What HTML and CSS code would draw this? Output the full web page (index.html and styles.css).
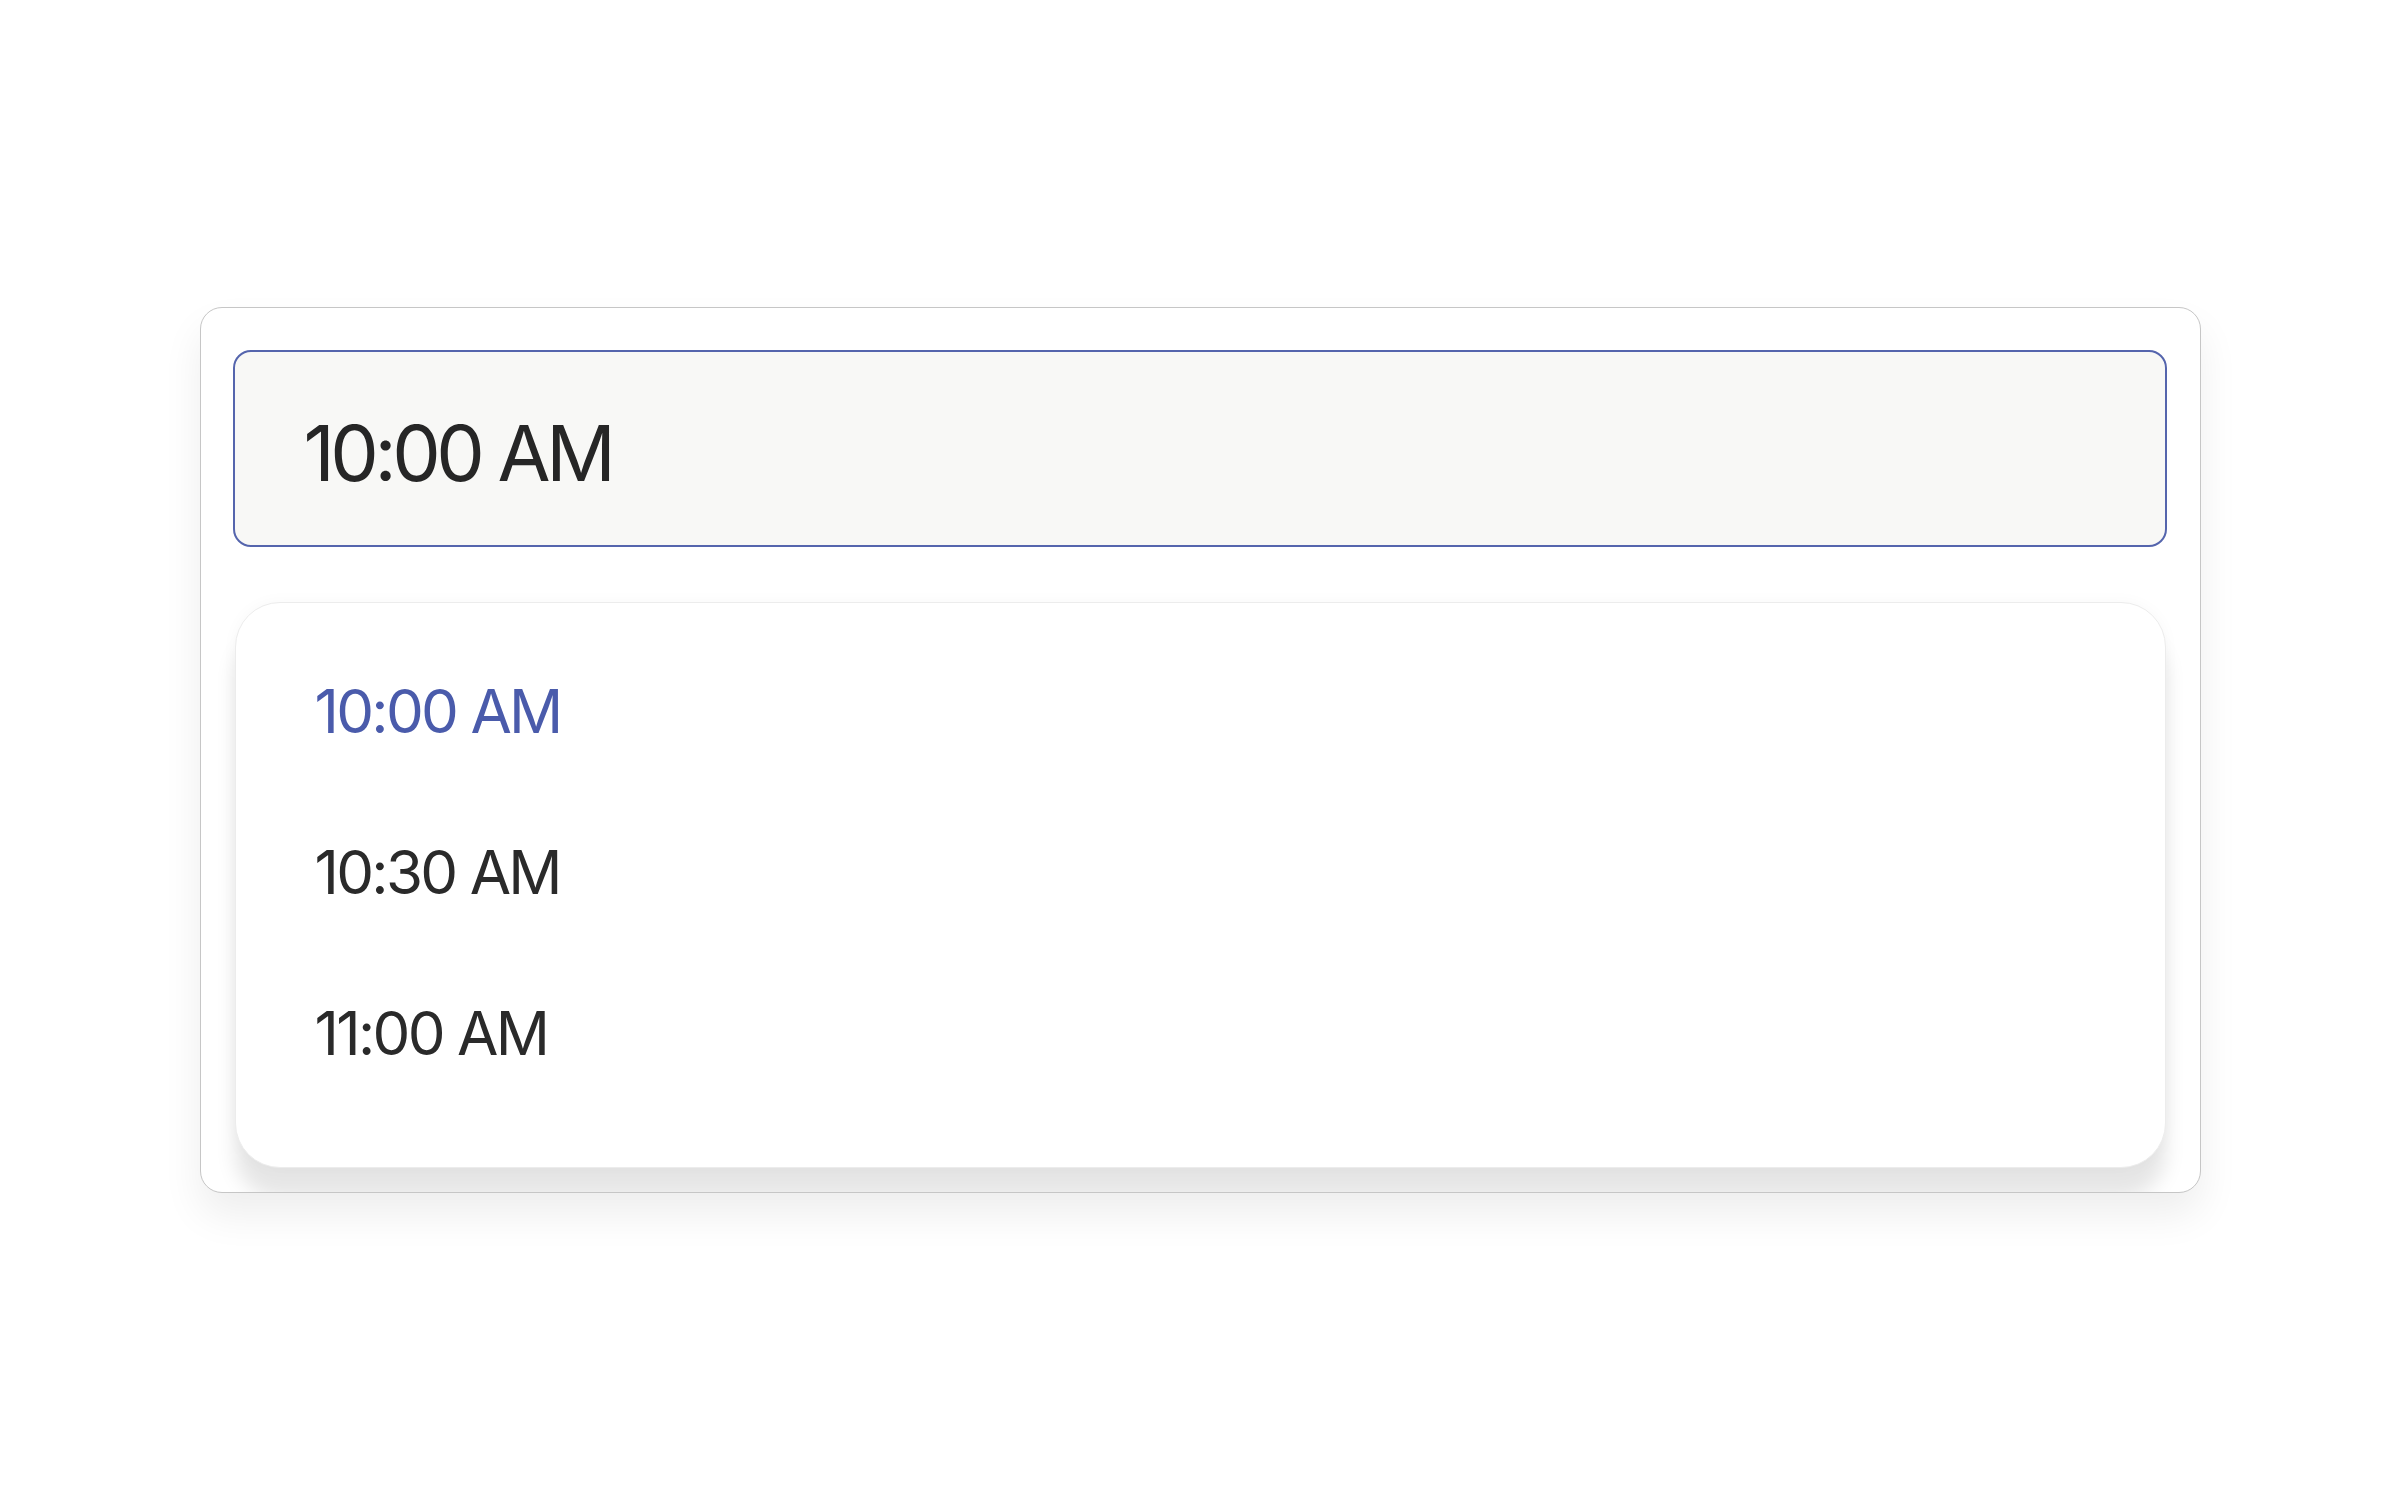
FILE: index.html
```html
<!DOCTYPE html>
<html>
<head>
<meta charset="utf-8">
<link rel="stylesheet" href="styles.css">
</head>
<body>
<div class="stage">
  <div class="card">
    <div class="input">10:00 AM</div>
    <ul class="menu">
      <li class="item active">10:00 AM</li>
      <li class="item">10:30 AM</li>
      <li class="item">11:00 AM</li>
    </ul>
  </div>
</div>
</body>
</html>
```

FILE: styles.css
```css
html, body {
  margin: 0;
  padding: 0;
  background: #ffffff;
}
body {
  font-family: Inter, "Liberation Sans", sans-serif;
  color: #2a2a2a;
}
.stage {
  width: 2400px;
  height: 1500px;
  display: flex;
  align-items: center;
  justify-content: center;
}
.card {
  box-sizing: border-box;
  width: 2001px;
  height: 886px;
  border: 1px solid #c6c6c6;
  border-radius: 22px;
  background: #ffffff;
  padding: 42px 33px 0 32px;
  overflow: hidden;
  box-shadow: 0 22px 40px rgba(0, 0, 0, 0.07);
  display: flex;
  flex-direction: column;
}
.input {
  box-sizing: border-box;
  height: 197px;
  border: 2px solid #5565ad;
  border-radius: 18px;
  background: #f8f8f6;
  display: flex;
  align-items: center;
  padding-left: 69px;
  padding-top: 9px;
  font-size: 77px;
  letter-spacing: -0.058em;
  color: #262626;
}
.menu {
  list-style: none;
  margin: 55px 1px 0 2px;
  padding: 27px 0 55px 0;
  height: 566px;
  box-sizing: border-box;
  border: 1px solid #ececec;
  border-radius: 45px;
  background: #ffffff;
  box-shadow: 0 30px 20px rgba(0, 0, 0, 0.1), 0 0 16px rgba(0, 0, 0, 0.03);
}
.item {
  height: 161px;
  display: flex;
  align-items: center;
  padding-left: 79px;
  font-size: 60px;
  letter-spacing: -0.045em;
  color: #2a2a2a;
}
.item.active {
  color: #4a5bab;
}
```
